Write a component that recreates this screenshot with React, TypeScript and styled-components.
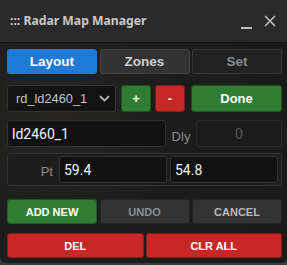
import * as React from "react";
import styled, { createGlobalStyle } from "styled-components";
import { useState } from "react";

const GlobalStyle = createGlobalStyle`
  html, body {
    margin: 0;
    padding: 0;
    background: #3a3a3a;
  }
  * {
    box-sizing: border-box;
  }
`;

const Panel = styled.div`
  width: 287px;
  height: 263px;
  background: radial-gradient(circle at 20% 45%, #262523 0%, #1c1c1c 45%, #1a1a1a 100%);
  border-radius: 0 0 6px 6px;
  overflow: hidden;
  font-family: "Liberation Sans", Arial, sans-serif;
`;

const Header = styled.div`
  height: 43px;
  display: flex;
  align-items: center;
  padding: 0 11px 0 10px;
  background: #2a2a2a;
  border-bottom: 1px solid #121212;
`;

const Title = styled.div`
  flex: 1;
  font-family: "Noto Sans", sans-serif;
  font-weight: 700;
  font-size: 12.2px;
  color: #c8c8c8;
  margin-top: -1px;
`;

const HeadBtn = styled.span<{ $mr?: number; $mt?: number }>`
  display: flex;
  align-items: center;
  margin-right: ${(p) => p.$mr ?? 0}px;
  margin-top: ${(p) => p.$mt ?? 0}px;
`;

const Body = styled.div`
  display: flex;
  flex-direction: column;
  padding: 6px 5px 0 7px;
`;

const Grid = styled.div<{ $cols: number; $gap: number; $mt: number }>`
  display: grid;
  grid-template-columns: repeat(${(p) => p.$cols}, 1fr);
  gap: ${(p) => p.$gap}px;
  margin-top: ${(p) => p.$mt}px;
`;

const Tab = styled.button<{ $active?: boolean; $dim?: boolean }>`
  height: 25px;
  border-radius: 3px;
  border: 1px solid ${(p) => (p.$active ? "#1e7ad6" : p.$dim ? "#363636" : "#444")};
  background: ${(p) => (p.$active ? "#1e7ad6" : p.$dim ? "#212121" : "#323232")};
  color: ${(p) => (p.$active ? "#ffffff" : p.$dim ? "#8a8a8a" : "#cfcfcf")};
  font-family: "Liberation Sans", Arial, sans-serif;
  font-weight: 700;
  font-size: 13.5px;
  padding: 0;
`;

const Row = styled.div<{ $mt: number }>`
  display: flex;
  align-items: center;
  margin-top: ${(p) => p.$mt}px;
`;

const Select = styled.div`
  width: 109px;
  height: 27px;
  background: #121212;
  border: 1px solid #333;
  border-radius: 3px;
  display: flex;
  align-items: center;
  justify-content: space-between;
  padding: 0 5px 0 8px;
  color: #c4c4c4;
  font-size: 12.8px;
`;

const ColorBtn = styled.button<{ $color: string; $w: number; $ml: number }>`
  width: ${(p) => p.$w}px;
  height: 27px;
  margin-left: ${(p) => p.$ml}px;
  background: ${(p) => p.$color};
  border: 1px solid rgba(0, 0, 0, 0.35);
  border-radius: 3px;
  color: #fff;
  font-family: "Liberation Sans", Arial, sans-serif;
  font-weight: 700;
  font-size: 13px;
  padding: 0;
`;

const Field = styled.div<{ $w: number; $dim?: boolean; $ml?: number }>`
  width: ${(p) => p.$w}px;
  height: 27px;
  margin-left: ${(p) => p.$ml ?? 0}px;
  background: ${(p) => (p.$dim ? "#1b1b1b" : "#111")};
  border: 1px solid ${(p) => (p.$dim ? "#2c2c2c" : "#333")};
  border-radius: 3px;
  display: flex;
  align-items: center;
  justify-content: ${(p) => (p.$dim ? "center" : "flex-start")};
  padding-left: ${(p) => (p.$dim ? 0 : 4)}px;
  color: ${(p) => (p.$dim ? "#555" : "#f2f2f2")};
  font-family: Roboto, "Liberation Sans", sans-serif;
  font-size: 14px;
`;

const Label = styled.span<{ $w: number }>`
  width: ${(p) => p.$w}px;
  text-align: center;
  color: #8c8c8c;
  font-size: 13px;
  margin-top: 6px;
`;

const Group = styled.div`
  margin-top: 6px;
  height: 33px;
  background: #1d1d1d;
  border: 1px solid #333;
  border-radius: 3px;
  display: flex;
  align-items: center;
  padding: 0 3px 0 0;
`;

const PtLabel = styled.span`
  width: 51px;
  text-align: right;
  padding-right: 6px;
  color: #8c8c8c;
  font-size: 13px;
  margin-top: 3px;
`;

const ActBtn = styled.button<{ $color: string; $text: string }>`
  height: 25px;
  border-radius: 3px;
  border: 1px solid rgba(0, 0, 0, 0.3);
  background: ${(p) => p.$color};
  color: ${(p) => p.$text};
  font-family: "Liberation Sans", Arial, sans-serif;
  font-weight: 700;
  font-size: 11px;
  padding: 0;
`;

const Chevron = () => (
  <svg width="11" height="7" viewBox="0 0 11 7">
    <path d="M1 1.2 L5.5 5.6 L10 1.2" fill="none" stroke="#bdbdbd" strokeWidth="1.8" />
  </svg>
);

const CloseIcon = () => (
  <svg width="12" height="12" viewBox="0 0 12 12">
    <path d="M1 1 L11 11 M11 1 L1 11" stroke="#bdbdbd" strokeWidth="1.6" />
  </svg>
);

const MinIcon = () => (
  <svg width="11" height="2" viewBox="0 0 11 2">
    <rect width="11" height="2" fill="#bdbdbd" />
  </svg>
);

const App: React.FC = () => {
  const [tab, setTab] = useState("Layout");

  return (
    <>
      <GlobalStyle />
      <Panel>
        <Header>
          <Title>::: Radar Map Manager</Title>
          <HeadBtn $mr={12} $mt={14}>
            <MinIcon />
          </HeadBtn>
          <HeadBtn>
            <CloseIcon />
          </HeadBtn>
        </Header>
        <Body>
          <Grid $cols={3} $gap={2.5} $mt={0}>
            <Tab $active={tab === "Layout"} onClick={() => setTab("Layout")}>
              Layout
            </Tab>
            <Tab $active={tab === "Zones"} onClick={() => setTab("Zones")}>
              Zones
            </Tab>
            <Tab $dim>Set</Tab>
          </Grid>

          <Row $mt={11}>
            <Select>
              <span>rd_ld2460_1</span>
              <Chevron />
            </Select>
            <ColorBtn $color="#2e7d32" $w={30} $ml={5}>
              +
            </ColorBtn>
            <ColorBtn $color="#c62828" $w={30} $ml={4}>
              -
            </ColorBtn>
            <ColorBtn $color="#2e7d32" $w={91} $ml={6}>
              Done
            </ColorBtn>
          </Row>

          <Row $mt={8}>
            <Field $w={159}>ld2460_1</Field>
            <Label $w={30}>Dly</Label>
            <Field $w={86} $dim>
              0
            </Field>
          </Row>

          <Group>
            <PtLabel>Pt</PtLabel>
            <Field $w={108}>59.4</Field>
            <Field $w={108} $ml={3}>
              54.8
            </Field>
          </Group>

          <Grid $cols={3} $gap={2.5} $mt={13}>
            <ActBtn $color="#2e7d32" $text="#ffffff">ADD NEW</ActBtn>
            <ActBtn $color="#333333" $text="#8f8f8f">UNDO</ActBtn>
            <ActBtn $color="#333333" $text="#b8b8b8">CANCEL</ActBtn>
          </Grid>

          <Grid $cols={2} $gap={2} $mt={9}>
            <ActBtn $color="#c62828" $text="#ffffff">DEL</ActBtn>
            <ActBtn $color="#c62828" $text="#ffffff">CLR ALL</ActBtn>
          </Grid>
        </Body>
      </Panel>
    </>
  );
};

export default App;
